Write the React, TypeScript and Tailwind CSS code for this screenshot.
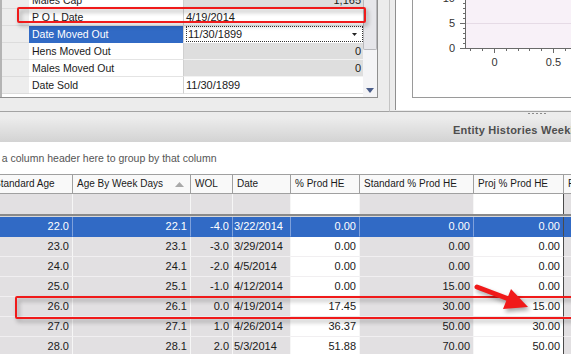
import React from "react";

type PropRow = { label: string; value: string; right: boolean; gray: boolean; selected?: boolean };

const propRows: PropRow[] = [
  { label: "Males Cap", value: "1,165", right: true, gray: true },
  { label: "P O L Date", value: "4/19/2014", right: false, gray: false },
  { label: "Date Moved Out", value: "11/30/1899", right: false, gray: false, selected: true },
  { label: "Hens Moved Out", value: "0", right: true, gray: true },
  { label: "Males Moved Out", value: "0", right: true, gray: true },
  { label: "Date Sold", value: "11/30/1899", right: false, gray: false },
];

type Col = { cls: string; title: string; gray: boolean; left?: boolean; sort?: boolean; dark?: boolean };

const cols: Col[] = [
  { cls: "w-[83px]", title: "Standard Age", gray: true },
  { cls: "w-[118px]", title: "Age By Week Days", gray: true, sort: true },
  { cls: "w-[42px]", title: "WOL", gray: true },
  { cls: "w-[58px]", title: "Date", gray: true, left: true },
  { cls: "w-[69px]", title: "% Prod HE", gray: false },
  { cls: "w-[114px]", title: "Standard % Prod HE", gray: true },
  { cls: "w-[90px]", title: "Proj % Prod HE", gray: false, dark: true },
  { cls: "w-[86px]", title: "Proj % Prod ME", gray: true },
];

const rows: string[][] = [
  ["22.0", "22.1", "-4.0", "3/22/2014", "0.00", "0.00", "0.00", ""],
  ["23.0", "23.1", "-3.0", "3/29/2014", "0.00", "0.00", "0.00", ""],
  ["24.0", "24.1", "-2.0", "4/5/2014", "0.00", "0.00", "0.00", ""],
  ["25.0", "25.1", "-1.0", "4/12/2014", "0.00", "15.00", "0.00", ""],
  ["26.0", "26.1", "0.0", "4/19/2014", "17.45", "30.00", "15.00", ""],
  ["27.0", "27.1", "1.0", "4/26/2014", "36.37", "50.00", "30.00", ""],
  ["28.0", "28.1", "2.0", "5/3/2014", "51.88", "70.00", "50.00", ""],
];

function Chart() {
  const yMinor = [3.5, 8.5, 13.5, 18.5, 28.5, 33.5, 38.5, 43.5];
  const xTicks: number[] = [];
  for (let i = -2; i <= 6; i++) xTicks.push(81 + i * 11.8);
  return (
    <svg width="158" height="97" className="block">
      <rect x="52" y="0" width="106" height="48" fill="#f8f1f8" />
      <line x1="53" y1="23.5" x2="158" y2="23.5" stroke="#e6dbe6" />
      <line x1="52.5" y1="0" x2="52.5" y2="49" stroke="#6a6a6a" />
      <line x1="52" y1="48.5" x2="158" y2="48.5" stroke="#6a6a6a" />
      {yMinor.map((y) => (
        <line key={y} x1="50" y1={y} x2="52" y2={y} stroke="#6a6a6a" />
      ))}
      <line x1="47" y1="23.5" x2="52" y2="23.5" stroke="#6a6a6a" />
      <line x1="47" y1="48.5" x2="52" y2="48.5" stroke="#6a6a6a" />
      {xTicks.map((x, i) => {
        const major = i === 2 || i === 7;
        const xx = Math.round(x) + 0.5;
        return <line key={i} x1={xx} y1="49" x2={xx} y2={major ? 53 : 51} stroke="#6a6a6a" />;
      })}
      <g fontFamily="'Liberation Sans', Arial, sans-serif" fontSize="11" fill="#333">
        <text x="42" y="2" textAnchor="end">10</text>
        <text x="42" y="27" textAnchor="end">5</text>
        <text x="42" y="52" textAnchor="end">0</text>
        <text x="81.5" y="66" textAnchor="middle">0</text>
        <text x="140.5" y="66" textAnchor="middle">0.5</text>
      </g>
    </svg>
  );
}

export default function App() {
  return (
    <div className="relative w-[571px] h-[354px] overflow-hidden bg-[#ececec] font-['Liberation_Sans',Arial,sans-serif] text-[11px] text-[#1a1a1a] leading-none">
      {/* top section */}
      <div className="flex h-[112px]">
        <div className="w-[390px] flex flex-col border-b border-[#a3a3a3]">
          <div className="h-[98px] w-[378px] flex border-r border-b border-[#8f8f8f] bg-white">
            <div className="w-[363px] h-[97px] overflow-hidden border-l-2 border-[#b4b4b4]">
              <div className="-mt-[8px]">
                {propRows.map((r) => (
                  <div key={r.label} className="flex h-[17px] text-[10.5px]">
                    <div className="w-[27px] shrink-0 bg-[#ededed] border-b border-[#dcdcdc]" />
                    <div
                      className={
                        "w-[154px] shrink-0 flex items-center pl-[3px] border-b " +
                        (r.selected ? "bg-[#316ac5] text-white border-[#316ac5]" : "bg-white border-[#e4e4e4]")
                      }
                    >
                      {r.label}
                    </div>
                    <div
                      className={
                        "w-[180px] shrink-0 flex items-center border-l border-[#d0d0d0] text-[11px] " +
                        (r.selected
                          ? "bg-white border-b border-b-transparent"
                          : r.gray
                          ? "bg-[#dedede] border-b border-b-[#f2f2f2]"
                          : "bg-white border-b border-b-[#e4e4e4]") +
                        (r.right ? " justify-end pr-[2px]" : " pl-[2px]")
                      }
                    >
                      {r.selected ? (
                        <div className="flex-1 h-[16px] border border-dotted border-[#333] flex items-center justify-between pl-[1px] pr-[5px]">
                          <span>11/30/1899</span>
                          <svg width="5" height="3"><polygon points="0,0 5,0 2.5,3" fill="#222" /></svg>
                        </div>
                      ) : (
                        r.value
                      )}
                    </div>
                  </div>
                ))}
              </div>
            </div>
            <div className="w-[14px] h-[97px] bg-[#f4f4f6] flex flex-col justify-between">
              <div className="h-[50px] bg-[#e6e6ea] border border-t-0 border-[#b8b8bc] rounded-b-[2px]" />
              <div className="h-[14px] flex items-center justify-center">
                <svg width="8" height="5"><polygon points="0,0 8,0 4,5" fill="#4a5d8a" /></svg>
              </div>
            </div>
          </div>
        </div>
        <div className="flex-1 border-l border-[#c4c4c4] pl-[5px] border-b border-b-[#a3a3a3]">
          <div className="h-[110px] border-l border-[#8f8f8f] bg-white pl-[16px]">
            <div className="h-[98px] border-l border-b border-[#9a9a9a] bg-white">
              <Chart />
            </div>
          </div>
        </div>
      </div>

      {/* splitter */}
      <div className="h-[6px] flex items-start pl-[528px] pt-[1px]">
        <div className="flex gap-[2px]">
          <div className="w-[2px] h-[1px] bg-[#8a8a8a]" />
          <div className="w-[2px] h-[1px] bg-[#8a8a8a]" />
          <div className="w-[2px] h-[1px] bg-[#8a8a8a]" />
          <div className="w-[2px] h-[1px] bg-[#8a8a8a]" />
          <div className="w-[2px] h-[1px] bg-[#8a8a8a]" />
        </div>
      </div>

      {/* title band */}
      <div className="h-[24px] bg-gradient-to-b from-[#ececec] to-[#d3d3d3] flex items-center pl-[453px] whitespace-nowrap overflow-hidden font-bold text-[11px] tracking-[0.25px] text-[#4e4e4e]">
        Entity Histories Weekly
      </div>

      {/* group panel */}
      <div className="h-[32px] bg-white flex items-center overflow-hidden whitespace-nowrap text-[10.5px] text-[#555]">
        <span className="-ml-[24px]">Drag a column header here to group by that column</span>
      </div>

      {/* grid */}
      <div className="overflow-hidden bg-white">
        <div className="-ml-[10px] w-[660px]">
          {/* header */}
          <div className="flex h-[20px] border-t border-b border-[#a0a0a0] bg-[#f9f9f9] text-[10px]">
            {cols.map((c) => (
              <div
                key={c.title}
                className={c.cls + " shrink-0 h-full border-r border-[#a0a0a0] flex items-center justify-between pl-[4px] pr-[6px] whitespace-nowrap overflow-hidden"}
              >
                <span>{c.title}</span>
                {c.sort ? (
                  <svg width="9" height="5"><polygon points="0,5 9,5 4.5,0" fill="#a9a9a9" /></svg>
                ) : null}
              </div>
            ))}
          </div>
          {/* filter row */}
          <div className="flex h-[20px]">
            {cols.map((c) => (
              <div
                key={c.title}
                className={
                  c.cls +
                  " shrink-0 h-full border-r " +
                  (c.dark ? "border-[#4a4a4a] " : "border-[#f6f6f6] ") +
                  (c.gray ? "bg-[#e2e0e2]" : "bg-white")
                }
              />
            ))}
          </div>
          <div className="h-[2px] bg-[#8a8a8a]" />
          <div className="h-[1px] bg-[#d8d8d8]" />
          {/* data rows */}
          {rows.map((r, ri) => {
            const sel = ri === 0;
            return (
              <div key={ri} className="flex h-[20px]">
                {cols.map((c, ci) => (
                  <div
                    key={c.title}
                    className={
                      c.cls +
                      " shrink-0 h-full border-r border-b flex items-center whitespace-nowrap " +
                      (c.left ? "pl-[1px] " : "justify-end pr-[3px] ") +
                      (sel
                        ? "bg-[#316ac5] text-white border-b-[#316ac5] " + (c.dark ? "border-r-[#4a4a4a]" : "border-r-[#7ea0db]")
                        : (c.gray ? "bg-[#e2e0e2] " : "bg-white ") +
                          "border-b-[#f1eff1] " +
                          (c.dark ? "border-r-[#4a4a4a]" : "border-r-[#f6f6f6]"))
                    }
                  >
                    {r[ci]}
                  </div>
                ))}
              </div>
            );
          })}
        </div>
      </div>

      {/* annotations */}
      <div className="absolute left-[17px] top-[7px] w-[349px] h-[16px] border-2 border-[#f01a1a] rounded-[2px] drop-shadow-[2px_3px_2px_rgba(0,0,0,0.35)]" />
      <div className="absolute left-[15px] top-[296px] w-[580px] h-[23px] border-2 border-[#f01a1a] rounded-[2px] drop-shadow-[2px_3px_2px_rgba(0,0,0,0.35)]" />
      <svg className="absolute left-0 top-0 pointer-events-none drop-shadow-[2px_3px_2px_rgba(0,0,0,0.35)]" width="571" height="354">
        <line x1="477" y1="287" x2="510" y2="299.5" stroke="#f01a1a" strokeWidth="5" strokeLinecap="round" />
        <polygon points="528,307 503,309 511,289" fill="#f01a1a" />
      </svg>
    </div>
  );
}
